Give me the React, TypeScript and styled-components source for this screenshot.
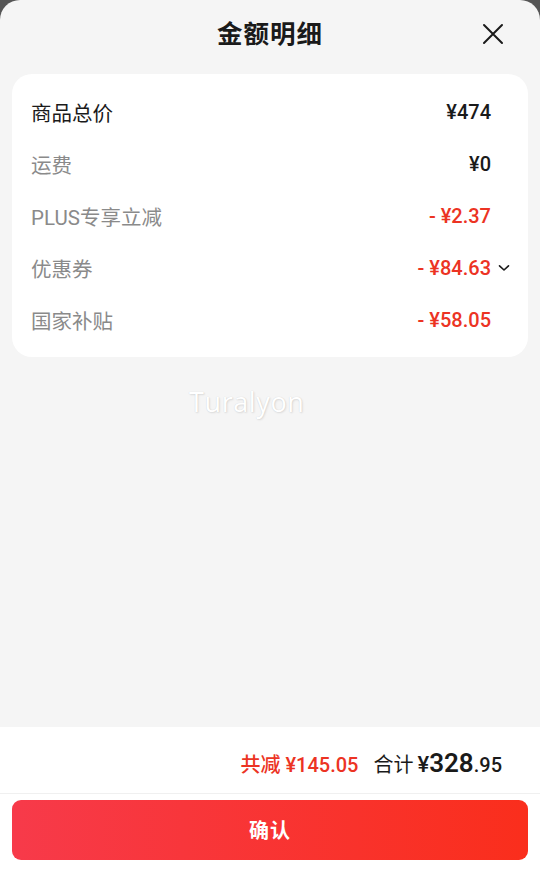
import styled, { createGlobalStyle } from "styled-components";

const GlobalStyle = createGlobalStyle`
    html, body {
        margin: 0;
        padding: 0;
        background-color: #565656;
    }
    * {
        box-sizing: border-box;
    }
`;

const FONT = `"Roboto", "Noto Sans CJK SC", "Noto Sans", sans-serif`;

interface IRow {
    label: string;
    value: string;
    primary?: boolean;
    discount?: boolean;
    expandable?: boolean;
}

const rows: IRow[] = [
    { label: "商品总价", value: "¥474", primary: true },
    { label: "运费", value: "¥0" },
    { label: "PLUS专享立减", value: "- ¥2.37", discount: true },
    { label: "优惠券", value: "- ¥84.63", discount: true, expandable: true },
    { label: "国家补贴", value: "- ¥58.05", discount: true },
];

const App = () => {
    return (
        <>
            <GlobalStyle />
            <Sheet>
                <Header>
                    <Title>金额明细</Title>
                    <CloseButton aria-label="关闭">
                        <svg width="22" height="22" viewBox="0 0 22 22" fill="none">
                            <path d="M2 2L20 20M20 2L2 20" stroke="#1a1a1a" strokeWidth="2" strokeLinecap="round" />
                        </svg>
                    </CloseButton>
                </Header>

                <Card>
                    {rows.map((row) => (
                        <Row key={row.label}>
                            <Label $primary={row.primary}>{row.label}</Label>
                            <Value $discount={row.discount}>{row.value}</Value>
                            <Chevron>
                                {row.expandable && (
                                    <svg width="12" height="8" viewBox="0 0 12 8" fill="none">
                                        <path d="M1.5 1.8L6 6L10.5 1.8" stroke="#1a1a1a" strokeWidth="1.6" strokeLinecap="round" strokeLinejoin="round" />
                                    </svg>
                                )}
                            </Chevron>
                        </Row>
                    ))}
                </Card>

                <Watermark>Turalyon</Watermark>

                <Spacer />

                <Summary>
                    <Saved>共减 ¥145.05</Saved>
                    <Total>
                        <TotalLabel>合计</TotalLabel>
                        <Yen>¥</Yen>
                        <Integer>328</Integer>
                        <Decimal>.95</Decimal>
                    </Total>
                </Summary>

                <ButtonArea>
                    <ConfirmButton>确认</ConfirmButton>
                </ButtonArea>
            </Sheet>
        </>
    );
};

const Sheet = styled.div`
    display: flex;
    flex-direction: column;
    width: 540px;
    height: 872px;
    background-color: #f5f5f5;
    border-radius: 20px 20px 0 0;
    overflow: hidden;
    font-family: ${FONT};
`;

const Header = styled.div`
    position: relative;
    display: flex;
    justify-content: center;
    align-items: center;
    height: 74px;
    padding-bottom: 12px;
`;

const Title = styled.h1`
    margin: 0;
    font-size: 25.5px;
    font-weight: 700;
    color: #1a1a1a;
    letter-spacing: 1px;
`;

const CloseButton = styled.button`
    position: absolute;
    right: 36px;
    top: 23px;
    width: 22px;
    height: 22px;
    padding: 0;
    border: none;
    background: transparent;
    display: flex;
    cursor: pointer;
`;

const Card = styled.div`
    margin: 0 12px;
    padding: 12px 18px 11px 19px;
    background-color: white;
    border-radius: 20px;
`;

const Row = styled.div`
    display: flex;
    align-items: center;
    height: 52px;
`;

const Label = styled.span<{ $primary?: boolean }>`
    flex: 1;
    font-size: 20.5px;
    color: ${({ $primary }) => ($primary ? "#1a1a1a" : "#8a8a8a")};
`;

const Value = styled.span<{ $discount?: boolean }>`
    font-size: 20px;
    font-weight: 500;
    color: ${({ $discount }) => ($discount ? "#ec3323" : "#1a1a1a")};
`;

const Chevron = styled.span`
    width: 19px;
    display: flex;
    justify-content: flex-end;
    align-items: center;
`;

const Watermark = styled.div`
    margin: 26px 0 0 189px;
    font-family: "Open Sans", sans-serif;
    font-size: 27px;
    color: #ffffff;
    letter-spacing: 0.6px;
    text-shadow: 0 0 1px rgba(0, 0, 0, 0.15), 1px 1px 2px rgba(0, 0, 0, 0.1);
`;

const Spacer = styled.div`
    flex: 1;
`;

const Summary = styled.div`
    display: flex;
    justify-content: flex-end;
    align-items: baseline;
    gap: 15px;
    height: 67px;
    padding: 21px 38px 0 0;
    background-color: white;
    border-bottom: 1px solid #f0f0f0;
`;

const Saved = styled.span`
    font-size: 20px;
    color: #ec3323;
    font-weight: 500;
`;

const Total = styled.span`
    display: flex;
    align-items: baseline;
    color: #1a1a1a;
`;

const TotalLabel = styled.span`
    font-size: 20px;
    margin-right: 4px;
`;

const Yen = styled.span`
    font-size: 22px;
    font-weight: 500;
`;

const Integer = styled.span`
    font-size: 26px;
    font-weight: 600;
`;

const Decimal = styled.span`
    font-size: 20px;
    font-weight: 500;
`;

const ButtonArea = styled.div`
    padding: 6px 12px 12px;
    background-color: white;
`;

const ConfirmButton = styled.button`
    width: 100%;
    height: 60px;
    padding-bottom: 3px;
    border: none;
    border-radius: 9px;
    background: linear-gradient(90deg, #f73a4a 0%, #fa2e1c 100%);
    color: white;
    font-family: ${FONT};
    font-size: 20px;
    font-weight: 700;
    letter-spacing: 1px;
    cursor: pointer;
`;

export default App;
